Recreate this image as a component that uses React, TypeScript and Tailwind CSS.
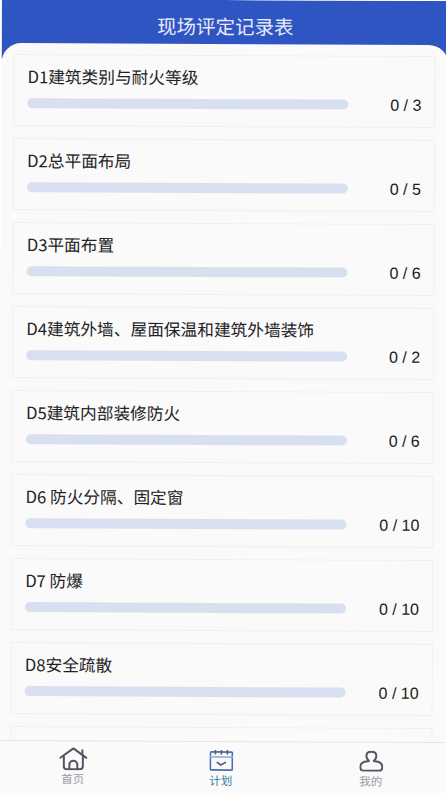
const items = [
  ["D1建筑类别与耐火等级", "0 / 3"],
  ["D2总平面布局", "0 / 5"],
  ["D3平面布置", "0 / 6"],
  ["D4建筑外墙、屋面保温和建筑外墙装饰", "0 / 2"],
  ["D5建筑内部装修防火", "0 / 6"],
  ["D6 防火分隔、固定窗", "0 / 10"],
  ["D7 防爆", "0 / 10"],
  ["D8安全疏散", "0 / 10"],
];

function Home() {
  return (
    <svg width="28" height="23" viewBox="0 0 28 23" fill="none" stroke="#50555f" strokeWidth="2" strokeLinecap="round" strokeLinejoin="round">
      <path d="M1 10.500 14 1l13 9.500" />
      <path d="M23 3v4.500" />
      <path d="M4.500 9.500V19a3 3 0 0 0 3 3h13a3 3 0 0 0 3-3V9.500" />
      <path d="M10 22v-4.500a4 4 0 0 1 8 0V22" />
    </svg>
  );
}

function Plan() {
  return (
    <svg width="24" height="21" viewBox="0 0 24 21" fill="none" stroke="#4a6db5" strokeWidth="1.700" strokeLinecap="round" strokeLinejoin="round">
      <rect x="1" y="2" width="22" height="18" rx="1" />
      <path d="M1 7h22" stroke="#9db2dc" />
      <path d="M6 .8v3M12 .8v3M18 .8v3" stroke="#5a6478" />
      <path d="m8 12.500 3.500 2.500 4.500-2.500" stroke="#5a6478" />
    </svg>
  );
}

function Me() {
  return (
    <svg width="24" height="21" viewBox="0 0 24 21" fill="none" stroke="#50555f" strokeWidth="2" strokeLinecap="round" strokeLinejoin="round">
      <path d="M12 1c3 0 5 1.800 5 4.300 0 2-1 3.500-2.500 5 4.500.4 8.500 1.400 8.500 5.700 0 2.500-1 4-3 4H4c-2 0-3-1.500-3-4 0-4.300 4-5.300 8.500-5.700C8 8.800 7 7.300 7 5.300 7 2.800 9 1 12 1Z" />
    </svg>
  );
}

const font = { fontFamily: '"Noto Sans CJK SC", "Noto Sans", sans-serif' };

export default function App() {
  return (
    <div className="w-[446px] h-[793px] overflow-hidden bg-white" style={font}>
      <div className="w-[447px] h-[795px] -ml-[0.5px] flex flex-col bg-[#fafafa] rotate-[0.26deg] origin-center overflow-hidden">
        <header className="h-[60px] shrink-0 bg-[#2f55c3] flex justify-center pt-[12px]">
          <h1 className="text-[19.500px] leading-[28px] font-normal text-[#e6ebf7]">现场评定记录表</h1>
        </header>
        <main className="flex-1 min-h-0 -mt-[16px] rounded-t-[20px] bg-[#fafafa] overflow-hidden pl-[12px] pr-[13px] pt-[11px] flex flex-col gap-[12px]">
          {items.map(([title, count], i) => (
            <section key={i} className="h-[72px] shrink-0 border border-[#f0f0f2] pl-[13px] pr-[13px] pt-[9px] flex flex-col">
              <h2 className="text-[16.700px] leading-[24px] font-normal text-[#222226] whitespace-nowrap">{title}</h2>
              <div className="flex items-center justify-between mt-[4px]">
                <div className="w-[321px] h-[10px] rounded-full bg-[#d8e0f0]" />
                <span className="text-[16px] leading-[20px] text-[#1c1c20] font-['Liberation_Sans',sans-serif] mt-[2px]">{count}</span>
              </div>
            </section>
          ))}
          <section className="h-[72px] shrink-0 border border-[#f0f0f2]" />
        </main>
        <nav className="h-[54px] shrink-0 border-t border-[#e4e4e6] bg-[#fafafa] grid grid-cols-3">
          <a className="flex flex-col items-center pt-[6px]">
            <Home />
            <span className="text-[11.500px] leading-[14px] mt-[1px] text-[#9a9a9e]">首页</span>
          </a>
          <a className="flex flex-col items-center pt-[8px] pr-[2px]">
            <Plan />
            <span className="text-[11.500px] leading-[14px] mt-[2px] text-[#3d7ba6]">计划</span>
          </a>
          <a className="flex flex-col items-center pt-[8px]">
            <Me />
            <span className="text-[11.500px] leading-[14px] mt-[2px] text-[#9a9a9e]">我的</span>
          </a>
        </nav>
      </div>
    </div>
  );
}
